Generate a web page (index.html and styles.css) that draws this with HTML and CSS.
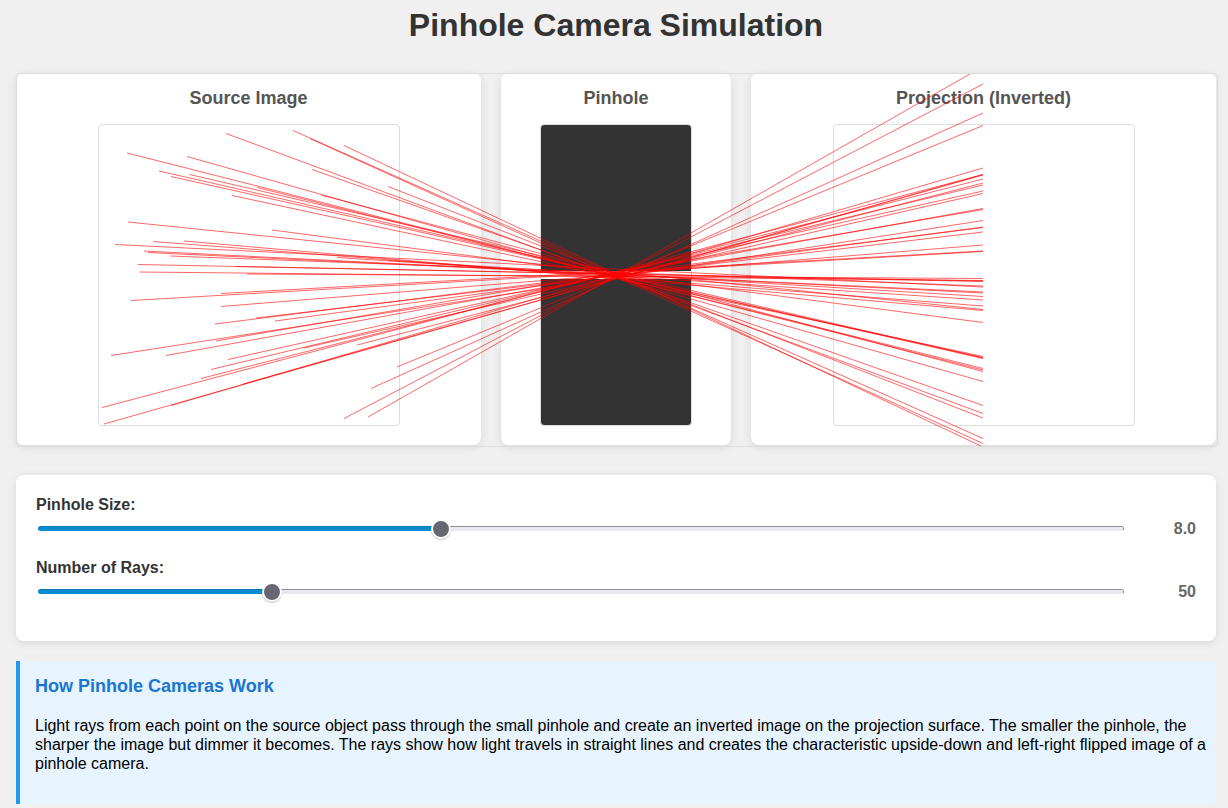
FILE: index.html
```html
<!DOCTYPE html>
<html lang="en">
<head>
<meta charset="utf-8">
<title>Pinhole Camera Simulation</title>
<link rel="stylesheet" href="styles.css">
</head>
<body>
<main class="page">
  <h1 class="title">Pinhole Camera Simulation</h1>

  <div class="stage">
    <section class="panel">
      <h3 class="panel-title">Source Image</h3>
      <div class="screen"></div>
    </section>
    <section class="panel">
      <h3 class="panel-title">Pinhole</h3>
      <div class="screen barrier"></div>
    </section>
    <section class="panel">
      <h3 class="panel-title">Projection (Inverted)</h3>
      <div class="screen"></div>
    </section>
    <svg class="rays" viewBox="0 0 1200 372" aria-hidden="true">
      <g transform="translate(-17 -74)">
        <path d="M226 133.5L983 413.5"/>
        <path d="M127 153L983 370"/>
        <path d="M187 156.5L983 381.5"/>
        <path d="M159 171L983 358.5"/>
        <path d="M189.5 174.5L983 358"/>
        <path d="M171 176.5L983 357.5"/>
        <path d="M257 187.5L983 368.5"/>
        <path d="M232 195.5L983 356.5"/>
        <path d="M128 222L983 309.5"/>
        <path d="M272 230L983 322.5"/>
        <path d="M153 241.5L983 306"/>
        <path d="M184 241L983 310.5"/>
        <path d="M115 244.5L983 287"/>
        <path d="M144 251L983 293"/>
        <path d="M148 252.5L983 292"/>
        <path d="M170 256L983 286"/>
        <path d="M138 264.5L983 281.5"/>
        <path d="M236 266.5L983 281"/>
        <path d="M139.5 272L983 280.5"/>
        <path d="M247 274L983 278.5"/>
        <path d="M293 130.5L983 438.5"/>
        <path d="M310 138.5L983 443.5"/>
        <path d="M344 145.5L983 447"/>
        <path d="M312 169.5L983 405.5"/>
        <path d="M388 186.5L983 418"/>
        <path d="M321 195L983 371.5"/>
        <path d="M337 257.5L983 300"/>
        <path d="M388 260.5L983 296.5"/>
        <path d="M131 300.5L983 251.5"/>
        <path d="M221 293.5L983 251"/>
        <path d="M221 306.5L983 245"/>
        <path d="M215 324L983 227.5"/>
        <path d="M256 318L983 232"/>
        <path d="M275 321L983 227"/>
        <path d="M111 355.5L983 220.5"/>
        <path d="M216 341L983 209.5"/>
        <path d="M166 355.5L983 208.5"/>
        <path d="M228 359.5L983 191"/>
        <path d="M211 369.5L983 185"/>
        <path d="M201 378.5L983 179"/>
        <path d="M102 407.5L983 174.5"/>
        <path d="M104 424L983 174.5"/>
        <path d="M171 405.5L983 168"/>
        <path d="M243 384L983 175"/>
        <path d="M304 348L983 193.5"/>
        <path d="M357 345L983 183"/>
        <path d="M397 367L983 125.5"/>
        <path d="M371 388.5L983 113"/>
        <path d="M344 418.5L983 84"/>
        <path d="M368 417L983 66.5"/>
      </g>
    </svg>
  </div>

  <section class="controls">
    <div class="control">
      <label class="control-label" for="pinhole-size">Pinhole Size:</label>
      <div class="control-row">
        <input class="slider" id="pinhole-size" type="range" min="1" max="20" step="0.5" value="8" style="--fill: 36.84%">
        <output class="value" for="pinhole-size">8.0</output>
      </div>
    </div>
    <div class="control">
      <label class="control-label" for="ray-count">Number of Rays:</label>
      <div class="control-row">
        <input class="slider" id="ray-count" type="range" min="10" max="200" step="10" value="50" style="--fill: 21.05%">
        <output class="value" for="ray-count">50</output>
      </div>
    </div>
  </section>

  <section class="info">
    <h3 class="info-title">How Pinhole Cameras Work</h3>
    <p class="info-text">Light rays from each point on the source object pass through the small pinhole and create an inverted image on the projection surface. The smaller the pinhole, the sharper the image but dimmer it becomes. The rays show how light travels in straight lines and creates the characteristic upside-down and left-right flipped image of a pinhole camera.</p>
  </section>
</main>
</body>
</html>
```
FILE: styles.css
```css
* {
  box-sizing: border-box;
}

body {
  margin: 0;
  padding: 7px 12px 4px 16px;
  background: #f0f0f0;
  color: #000;
  font-family: Arial, "Liberation Sans", sans-serif;
  font-size: 16px;
  line-height: 19px;
}

.page {
  max-width: 1200px;
  margin: 0 auto;
}

.title {
  margin: 0 0 30px;
  color: #333;
  font-size: 32px;
  line-height: 36px;
  text-align: center;
}

.stage {
  position: relative;
  display: grid;
  grid-template-columns: 93fr 46fr 93fr;
  gap: 20px;
  margin-bottom: 30px;
}

.panel {
  display: flex;
  flex-direction: column;
  align-items: center;
  padding: 15px 15px 19px;
  background: #fff;
  border-radius: 8px;
  box-shadow: 0 2px 10px rgba(0, 0, 0, 0.1);
}

.panel-title {
  margin: 0 0 15px;
  color: #555;
  font-size: 18px;
  line-height: 21px;
}

.screen {
  width: 302px;
  height: 302px;
  max-width: 100%;
  border: 1px solid #ddd;
  border-radius: 4px;
}

.barrier {
  width: 152px;
  background: linear-gradient(#333 146px, #fff 146px, #fff 154px, #333 154px);
}

.rays {
  position: absolute;
  top: 0;
  left: 0;
  box-sizing: content-box;
  width: 100%;
  height: 100%;
  border: 1px solid #ddd;
  border-radius: 4px;
  overflow: hidden;
  pointer-events: none;
  fill: none;
  stroke: rgba(255, 0, 0, 0.6);
  stroke-width: 1;
}

.controls {
  display: flex;
  flex-direction: column;
  gap: 20px;
  margin-bottom: 20px;
  padding: 20px 20px 40px;
  background: #fff;
  border-radius: 8px;
  box-shadow: 0 2px 10px rgba(0, 0, 0, 0.1);
}

.control-label {
  display: block;
  margin-bottom: 3px;
  color: #333;
  font-weight: bold;
  line-height: 20px;
}

.control-row {
  display: flex;
  align-items: center;
  gap: 20px;
  height: 20px;
}

.slider {
  flex: 1;
  min-width: 0;
  height: 20px;
  margin: 0 2px;
  background: none;
  appearance: none;
}

.slider::-webkit-slider-runnable-track {
  height: 5px;
  border-radius: 3px;
  background:
    linear-gradient(90deg, #0675b4 var(--fill), #8f8f9d var(--fill)) top / 100% 1px no-repeat,
    linear-gradient(#8f8f9d, #8f8f9d) right / 1px 100% no-repeat,
    linear-gradient(90deg, #048bd0 var(--fill), #e9e9ed var(--fill));
}

.slider::-webkit-slider-thumb {
  width: 20px;
  height: 20px;
  margin-top: -7px;
  border: 2px solid #fff;
  border-radius: 50%;
  background: #676774;
  box-shadow: 0 1px 1px rgba(0, 0, 0, 0.25);
  appearance: none;
}

.value {
  width: 50px;
  color: #666;
  font-weight: bold;
  text-align: right;
}

.info {
  padding: 15px 8px 31px 15px;
  background: #e7f3fd;
  border-left: 4px solid #2196f3;
  border-radius: 0 4px 4px 0;
}

.info-title {
  margin: 0 0 19px;
  color: #1976d2;
  font-size: 18px;
  line-height: 21px;
}

.info-text {
  margin: 0;
}
```
